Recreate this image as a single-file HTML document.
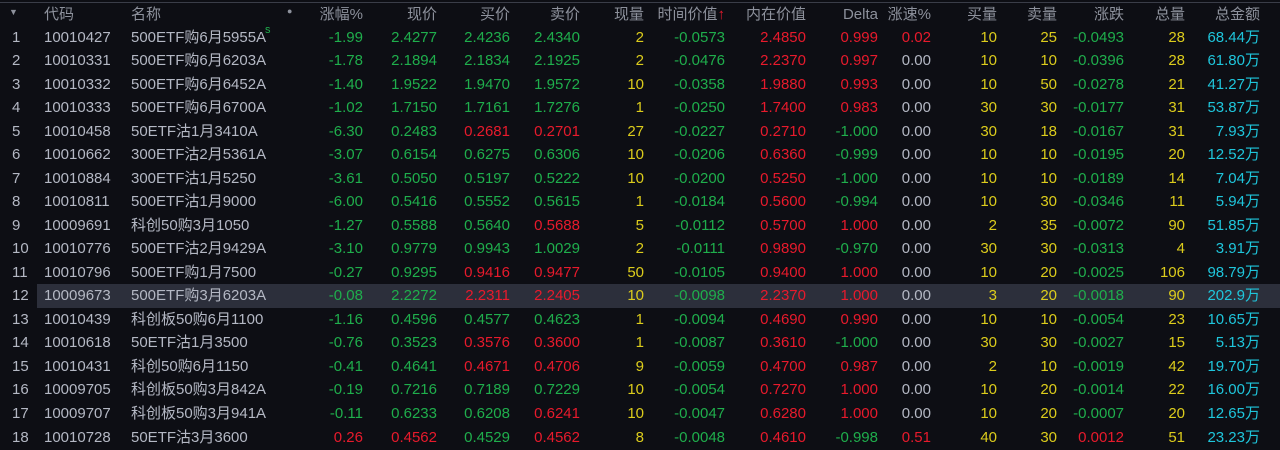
<!DOCTYPE html>
<html><head><meta charset="utf-8"><style>
body{margin:0;width:1280px;height:450px;background:#0d0e14;overflow:hidden;font-family:"Liberation Sans","Noto Sans CJK SC",sans-serif;font-size:15px;color:#b4b8c4}
.top{position:absolute;left:0;top:2px;width:1280px;height:1px;background:#3a3d48}
.r{position:absolute;left:0;width:1280px;height:23.53px;line-height:23.53px}
.bar{position:absolute;left:37px;right:0;top:0;bottom:0;background:#2c2f3b}
.r span{position:absolute;top:0;text-align:right;white-space:nowrap}
.h{top:3px;line-height:24px;color:#8d919c}
.a{left:12px;text-align:left!important}
.b{left:44px;text-align:left!important}
.n{left:131px;text-align:left!important}
.c3{left:290px;width:73px}.c4{left:367px;width:70px}.c5{left:440px;width:70px}.c6{left:510px;width:70px}
.c7{left:600px;width:44px}.c8{left:645px;width:80px}.c9{left:730px;width:76px}.c10{left:815px;width:63px}
.c11{left:880px;width:51px}.c12{left:950px;width:47px}.c13{left:1010px;width:47px}.c14{left:1055px;width:69px}
.c15{left:1135px;width:50px}.c16{left:1170px;width:90px}
.g{color:#1fae4c}.d{color:#e81a2c}.y{color:#dccc1c}.cy{color:#1fc6dc}.w{color:#b4b8c4}
</style></head><body>
<div class="top"></div>
<div class="r h"><span style="left:9px;font-size:9px;top:-3px">▼</span><span class="b">代码</span><span class="n">名称</span><span style="left:287px;font-size:9px;top:-4px">●</span><span class="c3">涨幅%</span><span class="c4">现价</span><span class="c5">买价</span><span class="c6">卖价</span><span class="c7">现量</span><span class="c8" style="left:630px;width:95px">时间价值<b style="color:#e81a2c;font-weight:normal">↑</b></span><span class="c9">内在价值</span><span class="c10">Delta</span><span class="c11">涨速%</span><span class="c12">买量</span><span class="c13">卖量</span><span class="c14">涨跌</span><span class="c15">总量</span><span class="c16">总金额</span></div>

<div class="r" style="top:25.5px"><span class="a">1</span><span class="b">10010427</span><span class="n">500ETF购6月5955A</span><span class="g" style="left:265px;top:-7px;font-size:11px">s</span><span class="c3 g">-1.99</span><span class="c4 g">2.4277</span><span class="c5 g">2.4236</span><span class="c6 g">2.4340</span><span class="c7 y">2</span><span class="c8 g">-0.0573</span><span class="c9 d">2.4850</span><span class="c10 d">0.999</span><span class="c11 d">0.02</span><span class="c12 y">10</span><span class="c13 y">25</span><span class="c14 g">-0.0493</span><span class="c15 y">28</span><span class="c16 cy">68.44万</span></div>
<div class="r" style="top:49.03px"><span class="a">2</span><span class="b">10010331</span><span class="n">500ETF购6月6203A</span><span class="c3 g">-1.78</span><span class="c4 g">2.1894</span><span class="c5 g">2.1834</span><span class="c6 g">2.1925</span><span class="c7 y">2</span><span class="c8 g">-0.0476</span><span class="c9 d">2.2370</span><span class="c10 d">0.997</span><span class="c11 w">0.00</span><span class="c12 y">10</span><span class="c13 y">10</span><span class="c14 g">-0.0396</span><span class="c15 y">28</span><span class="c16 cy">61.80万</span></div>
<div class="r" style="top:72.56px"><span class="a">3</span><span class="b">10010332</span><span class="n">500ETF购6月6452A</span><span class="c3 g">-1.40</span><span class="c4 g">1.9522</span><span class="c5 g">1.9470</span><span class="c6 g">1.9572</span><span class="c7 y">10</span><span class="c8 g">-0.0358</span><span class="c9 d">1.9880</span><span class="c10 d">0.993</span><span class="c11 w">0.00</span><span class="c12 y">10</span><span class="c13 y">50</span><span class="c14 g">-0.0278</span><span class="c15 y">21</span><span class="c16 cy">41.27万</span></div>
<div class="r" style="top:96.09px"><span class="a">4</span><span class="b">10010333</span><span class="n">500ETF购6月6700A</span><span class="c3 g">-1.02</span><span class="c4 g">1.7150</span><span class="c5 g">1.7161</span><span class="c6 g">1.7276</span><span class="c7 y">1</span><span class="c8 g">-0.0250</span><span class="c9 d">1.7400</span><span class="c10 d">0.983</span><span class="c11 w">0.00</span><span class="c12 y">30</span><span class="c13 y">30</span><span class="c14 g">-0.0177</span><span class="c15 y">31</span><span class="c16 cy">53.87万</span></div>
<div class="r" style="top:119.62px"><span class="a">5</span><span class="b">10010458</span><span class="n">50ETF沽1月3410A</span><span class="c3 g">-6.30</span><span class="c4 g">0.2483</span><span class="c5 d">0.2681</span><span class="c6 d">0.2701</span><span class="c7 y">27</span><span class="c8 g">-0.0227</span><span class="c9 d">0.2710</span><span class="c10 g">-1.000</span><span class="c11 w">0.00</span><span class="c12 y">30</span><span class="c13 y">18</span><span class="c14 g">-0.0167</span><span class="c15 y">31</span><span class="c16 cy">7.93万</span></div>
<div class="r" style="top:143.15px"><span class="a">6</span><span class="b">10010662</span><span class="n">300ETF沽2月5361A</span><span class="c3 g">-3.07</span><span class="c4 g">0.6154</span><span class="c5 g">0.6275</span><span class="c6 g">0.6306</span><span class="c7 y">10</span><span class="c8 g">-0.0206</span><span class="c9 d">0.6360</span><span class="c10 g">-0.999</span><span class="c11 w">0.00</span><span class="c12 y">10</span><span class="c13 y">10</span><span class="c14 g">-0.0195</span><span class="c15 y">20</span><span class="c16 cy">12.52万</span></div>
<div class="r" style="top:166.68px"><span class="a">7</span><span class="b">10010884</span><span class="n">300ETF沽1月5250</span><span class="c3 g">-3.61</span><span class="c4 g">0.5050</span><span class="c5 g">0.5197</span><span class="c6 g">0.5222</span><span class="c7 y">10</span><span class="c8 g">-0.0200</span><span class="c9 d">0.5250</span><span class="c10 g">-1.000</span><span class="c11 w">0.00</span><span class="c12 y">10</span><span class="c13 y">10</span><span class="c14 g">-0.0189</span><span class="c15 y">14</span><span class="c16 cy">7.04万</span></div>
<div class="r" style="top:190.21px"><span class="a">8</span><span class="b">10010811</span><span class="n">500ETF沽1月9000</span><span class="c3 g">-6.00</span><span class="c4 g">0.5416</span><span class="c5 g">0.5552</span><span class="c6 g">0.5615</span><span class="c7 y">1</span><span class="c8 g">-0.0184</span><span class="c9 d">0.5600</span><span class="c10 g">-0.994</span><span class="c11 w">0.00</span><span class="c12 y">10</span><span class="c13 y">30</span><span class="c14 g">-0.0346</span><span class="c15 y">11</span><span class="c16 cy">5.94万</span></div>
<div class="r" style="top:213.74px"><span class="a">9</span><span class="b">10009691</span><span class="n">科创50购3月1050</span><span class="c3 g">-1.27</span><span class="c4 g">0.5588</span><span class="c5 g">0.5640</span><span class="c6 d">0.5688</span><span class="c7 y">5</span><span class="c8 g">-0.0112</span><span class="c9 d">0.5700</span><span class="c10 d">1.000</span><span class="c11 w">0.00</span><span class="c12 y">2</span><span class="c13 y">35</span><span class="c14 g">-0.0072</span><span class="c15 y">90</span><span class="c16 cy">51.85万</span></div>
<div class="r" style="top:237.27px"><span class="a">10</span><span class="b">10010776</span><span class="n">500ETF沽2月9429A</span><span class="c3 g">-3.10</span><span class="c4 g">0.9779</span><span class="c5 g">0.9943</span><span class="c6 g">1.0029</span><span class="c7 y">2</span><span class="c8 g">-0.0111</span><span class="c9 d">0.9890</span><span class="c10 g">-0.970</span><span class="c11 w">0.00</span><span class="c12 y">30</span><span class="c13 y">30</span><span class="c14 g">-0.0313</span><span class="c15 y">4</span><span class="c16 cy">3.91万</span></div>
<div class="r" style="top:260.8px"><span class="a">11</span><span class="b">10010796</span><span class="n">500ETF购1月7500</span><span class="c3 g">-0.27</span><span class="c4 g">0.9295</span><span class="c5 d">0.9416</span><span class="c6 d">0.9477</span><span class="c7 y">50</span><span class="c8 g">-0.0105</span><span class="c9 d">0.9400</span><span class="c10 d">1.000</span><span class="c11 w">0.00</span><span class="c12 y">10</span><span class="c13 y">20</span><span class="c14 g">-0.0025</span><span class="c15 y">106</span><span class="c16 cy">98.79万</span></div>
<div class="r" style="top:284.33px"><div class="bar"></div><span class="a">12</span><span class="b">10009673</span><span class="n">500ETF购3月6203A</span><span class="c3 g">-0.08</span><span class="c4 g">2.2272</span><span class="c5 d">2.2311</span><span class="c6 d">2.2405</span><span class="c7 y">10</span><span class="c8 g">-0.0098</span><span class="c9 d">2.2370</span><span class="c10 d">1.000</span><span class="c11 w">0.00</span><span class="c12 y">3</span><span class="c13 y">20</span><span class="c14 g">-0.0018</span><span class="c15 y">90</span><span class="c16 cy">202.9万</span></div>
<div class="r" style="top:307.86px"><span class="a">13</span><span class="b">10010439</span><span class="n">科创板50购6月1100</span><span class="c3 g">-1.16</span><span class="c4 g">0.4596</span><span class="c5 g">0.4577</span><span class="c6 g">0.4623</span><span class="c7 y">1</span><span class="c8 g">-0.0094</span><span class="c9 d">0.4690</span><span class="c10 d">0.990</span><span class="c11 w">0.00</span><span class="c12 y">10</span><span class="c13 y">10</span><span class="c14 g">-0.0054</span><span class="c15 y">23</span><span class="c16 cy">10.65万</span></div>
<div class="r" style="top:331.39px"><span class="a">14</span><span class="b">10010618</span><span class="n">50ETF沽1月3500</span><span class="c3 g">-0.76</span><span class="c4 g">0.3523</span><span class="c5 d">0.3576</span><span class="c6 d">0.3600</span><span class="c7 y">1</span><span class="c8 g">-0.0087</span><span class="c9 d">0.3610</span><span class="c10 g">-1.000</span><span class="c11 w">0.00</span><span class="c12 y">30</span><span class="c13 y">30</span><span class="c14 g">-0.0027</span><span class="c15 y">15</span><span class="c16 cy">5.13万</span></div>
<div class="r" style="top:354.92px"><span class="a">15</span><span class="b">10010431</span><span class="n">科创50购6月1150</span><span class="c3 g">-0.41</span><span class="c4 g">0.4641</span><span class="c5 d">0.4671</span><span class="c6 d">0.4706</span><span class="c7 y">9</span><span class="c8 g">-0.0059</span><span class="c9 d">0.4700</span><span class="c10 d">0.987</span><span class="c11 w">0.00</span><span class="c12 y">2</span><span class="c13 y">10</span><span class="c14 g">-0.0019</span><span class="c15 y">42</span><span class="c16 cy">19.70万</span></div>
<div class="r" style="top:378.45px"><span class="a">16</span><span class="b">10009705</span><span class="n">科创板50购3月842A</span><span class="c3 g">-0.19</span><span class="c4 g">0.7216</span><span class="c5 g">0.7189</span><span class="c6 g">0.7229</span><span class="c7 y">10</span><span class="c8 g">-0.0054</span><span class="c9 d">0.7270</span><span class="c10 d">1.000</span><span class="c11 w">0.00</span><span class="c12 y">10</span><span class="c13 y">20</span><span class="c14 g">-0.0014</span><span class="c15 y">22</span><span class="c16 cy">16.00万</span></div>
<div class="r" style="top:401.98px"><span class="a">17</span><span class="b">10009707</span><span class="n">科创板50购3月941A</span><span class="c3 g">-0.11</span><span class="c4 g">0.6233</span><span class="c5 g">0.6208</span><span class="c6 d">0.6241</span><span class="c7 y">10</span><span class="c8 g">-0.0047</span><span class="c9 d">0.6280</span><span class="c10 d">1.000</span><span class="c11 w">0.00</span><span class="c12 y">10</span><span class="c13 y">20</span><span class="c14 g">-0.0007</span><span class="c15 y">20</span><span class="c16 cy">12.65万</span></div>
<div class="r" style="top:425.51px"><span class="a">18</span><span class="b">10010728</span><span class="n">50ETF沽3月3600</span><span class="c3 d">0.26</span><span class="c4 d">0.4562</span><span class="c5 g">0.4529</span><span class="c6 d">0.4562</span><span class="c7 y">8</span><span class="c8 g">-0.0048</span><span class="c9 d">0.4610</span><span class="c10 g">-0.998</span><span class="c11 d">0.51</span><span class="c12 y">40</span><span class="c13 y">30</span><span class="c14 d">0.0012</span><span class="c15 y">51</span><span class="c16 cy">23.23万</span></div>
</body></html>
